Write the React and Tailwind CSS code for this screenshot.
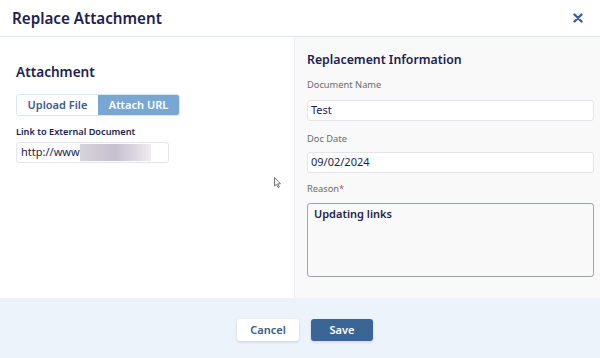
import React from "react";

export default function App() {
  return (
    <div className="w-[600px] h-[358px] bg-white flex flex-col overflow-hidden" style={{ fontFamily: '"Noto Sans", "Open Sans", sans-serif' }}>
      <div className="h-[37px] flex items-center justify-between pl-3 pr-[17px] border-b border-[#e3e8ef] shrink-0">
        <div className="text-[15.2px] font-semibold text-[#221d4e]">Replace Attachment</div>
        <svg width="10" height="10" viewBox="0 0 10 10" className="text-[#3e5f94]">
          <path d="M1.5 1.5 L8.5 8.5 M8.5 1.5 L1.5 8.5" stroke="currentColor" strokeWidth="2.4" strokeLinecap="round" />
        </svg>
      </div>
      <div className="flex h-[261px] shrink-0">
        <div className="w-[294px] pl-4 pt-[25px] relative">
          <div className="text-[13.6px] font-semibold text-[#221d4e] leading-[20px]">Attachment</div>
          <div className="mt-[12px] flex w-[164px] h-[22px] rounded-[3px] overflow-hidden border border-[#dbe6f1]">
            <div className="w-[81px] bg-white text-[#3b5a8a] text-[11px] font-semibold flex items-center justify-center">Upload File</div>
            <div className="flex-1 bg-[#79a7d3] text-white text-[11px] font-semibold flex items-center justify-center">Attach URL</div>
          </div>
          <div className="mt-[9px] text-[9.2px] font-semibold text-[#221d4e] leading-[14px]">Link to External Document</div>
          <div className="mt-[3px] w-[153px] h-[21px] border border-[#e2e5ea] rounded-[3px] flex items-center pl-[4px] text-[11px] text-[#221d4e]">
            <span>http://www</span>
            <span className="ml-0 w-[71px] h-[17px] bg-gradient-to-r from-[#d7d3dc] via-[#c6c0cf] to-[#eeecf0]" />
          </div>
          <svg className="absolute left-[274px] top-[140px]" width="8" height="12" viewBox="0 0 8 12">
            <path d="M0.5 0.5 L0.5 9 L2.5 7.3 L4 10.5 L5.3 10 L3.8 6.8 L6.5 6.8 Z" fill="white" stroke="#555" strokeWidth="0.8" />
          </svg>
        </div>
        <div className="flex-1 bg-[#f9f9f9] border-l border-[#eceff3] pl-3 pr-[6px] pt-[13px]">
          <div className="text-[12.3px] font-semibold text-[#221d4e] leading-[20px]">Replacement Information</div>
          <div className="mt-[8px] text-[9.3px] text-[#6b6b6b] leading-[14px]">Document Name</div>
          <div className="mt-[8px] h-[21px] bg-white border border-[#e2e5ea] rounded-[3px] flex items-center pl-[3px] text-[11px] text-[#221d4e]">Test</div>
          <div className="mt-[11px] text-[9.3px] text-[#6b6b6b] leading-[14px]">Doc Date</div>
          <div className="mt-[6px] h-[21px] bg-white border border-[#e2e5ea] rounded-[3px] flex items-center pl-[3px] text-[11px] text-[#221d4e]">09/02/2024</div>
          <div className="mt-[9px] text-[9.3px] text-[#6b6b6b] leading-[14px]">Reason<span className="text-[#e0455b]">*</span></div>
          <div className="mt-[7px] h-[74px] border border-[#9ea3aa] rounded-[3px] pl-[6px] pt-[2px] text-[11px] font-semibold text-[#221d4e] bg-[#f9f9f9]">Updating links</div>
        </div>
      </div>
      <div className="flex-1 bg-[#edf3fa] flex items-center justify-center gap-3 pl-[10px] pt-[4px]">
        <button className="w-[62px] h-[22px] bg-white rounded-[3px] shadow-[0_1px_3px_rgba(0,0,0,0.15)] text-[11px] font-semibold text-[#3b5a8a]">Cancel</button>
        <button className="w-[62px] h-[22px] bg-[#3b6595] rounded-[3px] shadow-[0_1px_3px_rgba(0,0,0,0.15)] text-[11px] font-semibold text-white">Save</button>
      </div>
    </div>
  );
}
